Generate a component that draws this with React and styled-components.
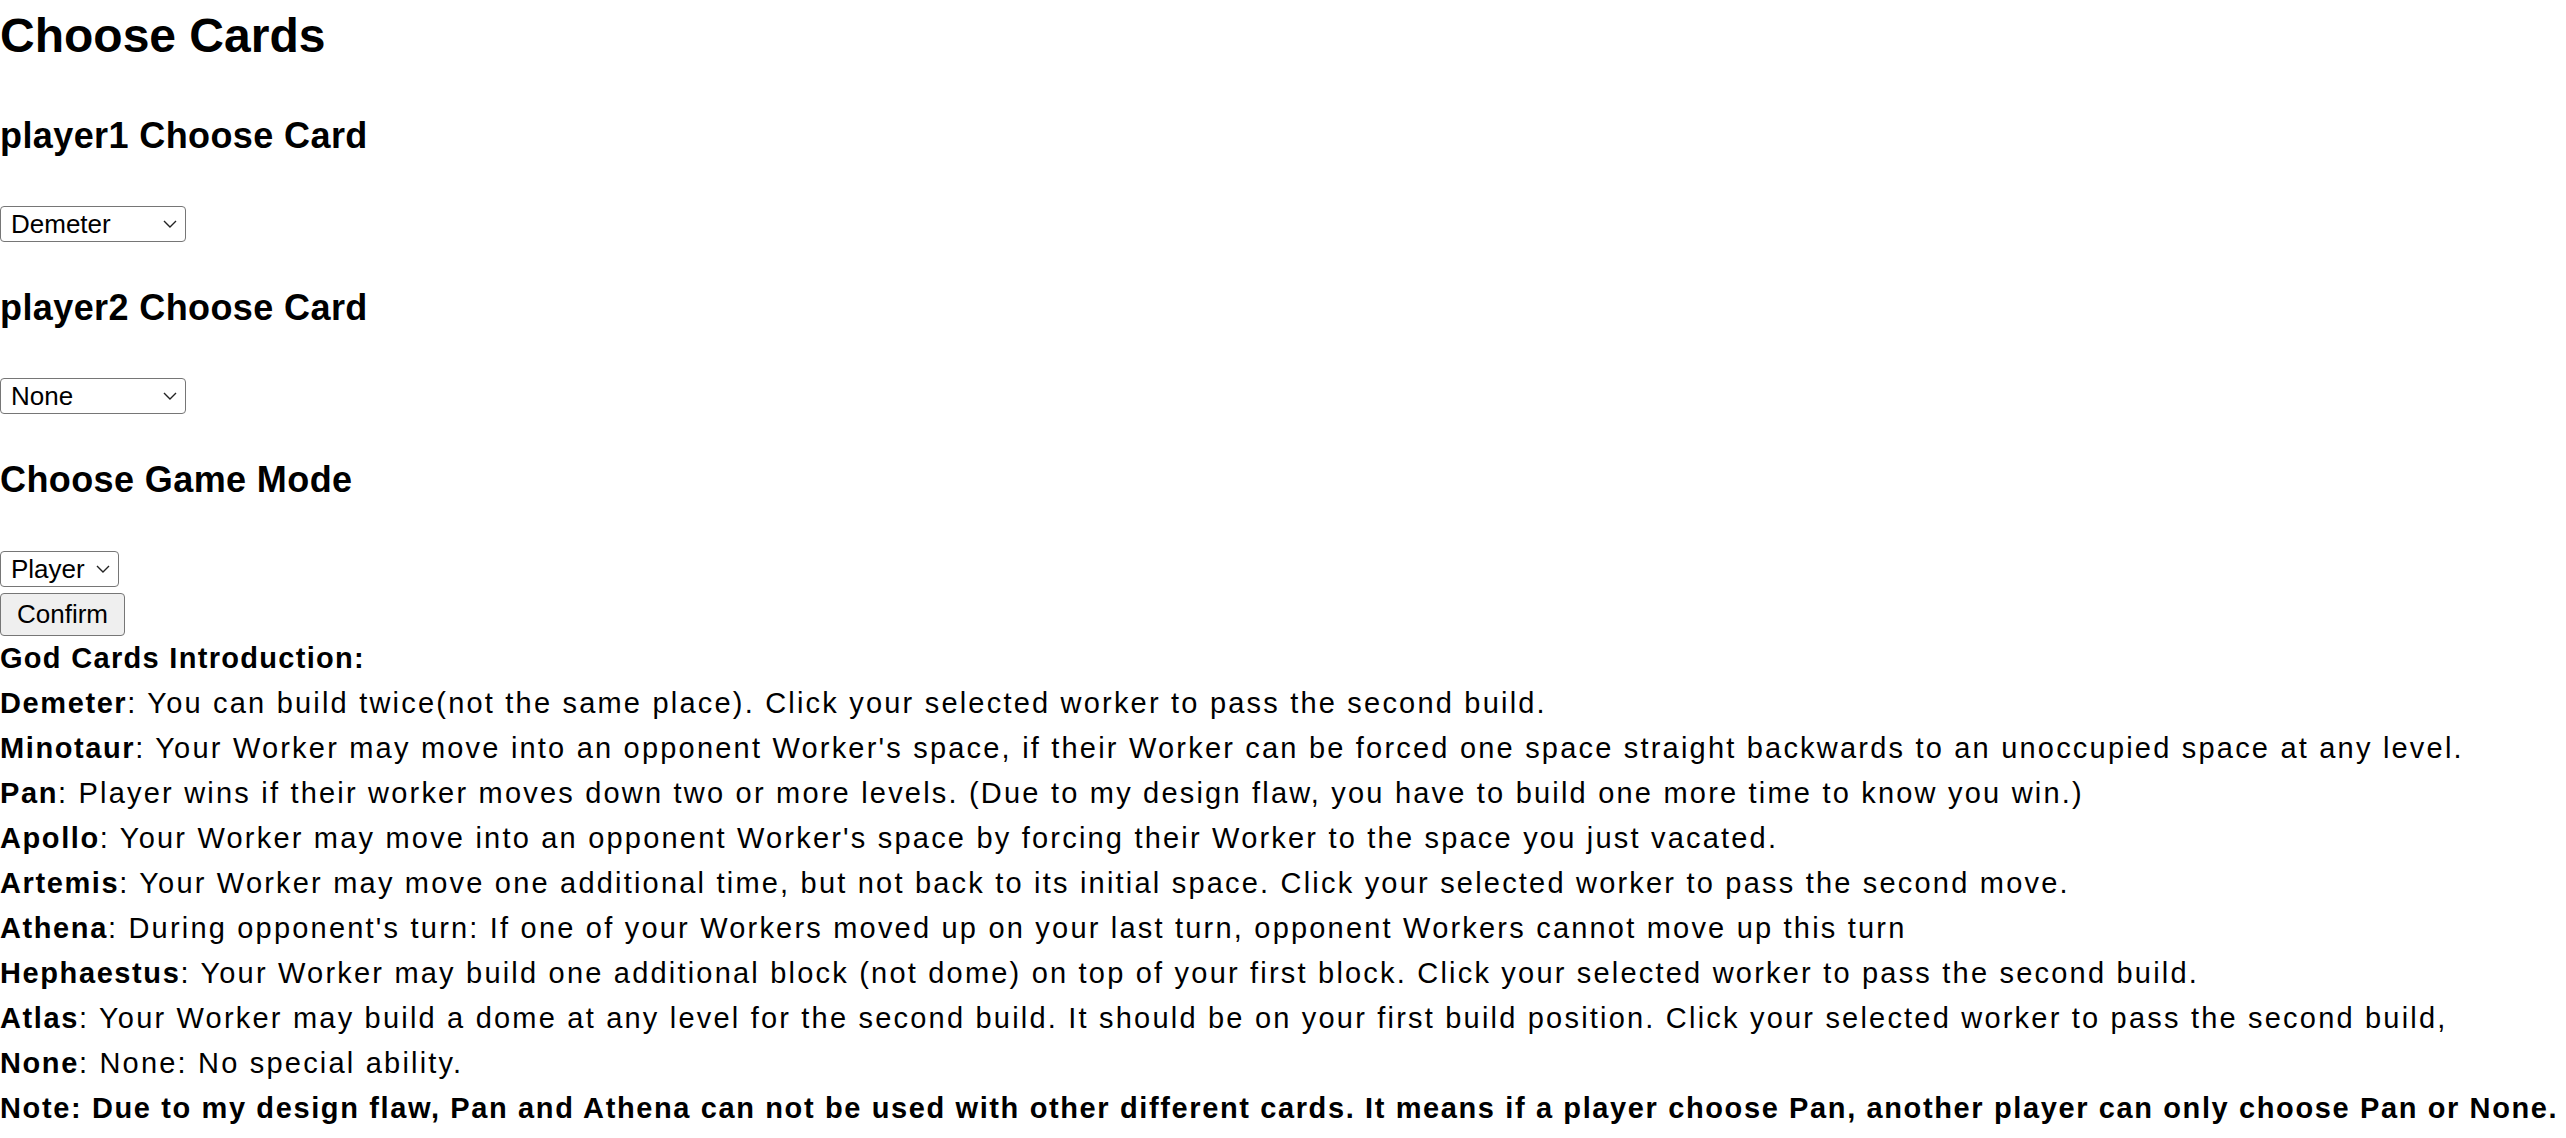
import React from "react";
import styled, { createGlobalStyle } from "styled-components";

const GlobalStyle = createGlobalStyle`
  body {
    margin: 0;
    background: #fff;
    color: #000;
    font-family: "Liberation Sans", Arial, sans-serif;
  }
`;

const Page = styled.div`
  display: flex;
  flex-direction: column;
  align-items: flex-start;
`;

const Title = styled.h1`
  margin: 8px 0 0;
  font-size: 48px;
  line-height: 56px;
  font-weight: 700;
`;

const Heading = styled.h2`
  margin: ${(p) => p.$top}px 0 0;
  font-size: 36px;
  line-height: 42px;
  font-weight: 700;
  letter-spacing: 0.4px;
`;

const SelectWrap = styled.div`
  position: relative;
  display: inline-block;
  margin-top: ${(p) => p.$top}px;
`;

const Select = styled.select`
  appearance: none;
  -webkit-appearance: none;
  display: block;
  box-sizing: border-box;
  width: ${(p) => p.$width}px;
  height: 36px;
  padding: 0 0 0 10px;
  border: 1px solid #767676;
  border-radius: 4px;
  background: #fff;
  color: #000;
  font-family: "Liberation Sans", Arial, sans-serif;
  font-size: 26px;
`;

const Chevron = styled.svg`
  position: absolute;
  right: 9px;
  top: 50%;
  width: 14px;
  height: 8px;
  margin-top: -4px;
  pointer-events: none;
`;

const Button = styled.button`
  box-sizing: border-box;
  margin-top: 6px;
  height: 43px;
  padding: 0 16px;
  border: 1px solid #767676;
  border-radius: 4px;
  background: #efefef;
  color: #000;
  font-family: "Liberation Sans", Arial, sans-serif;
  font-size: 26px;
`;

const Intro = styled.div`
  font-size: 29px;
  line-height: 45px;
  white-space: nowrap;
`;

const Line = styled.div`
  font-weight: ${(p) => (p.$bold ? 700 : 400)};
  letter-spacing: ${(p) => p.$spacing || 2.2}px;
`;

const Name = styled.b`
  font-weight: 700;
  letter-spacing: 1.6px;
`;

const cards = [
  "Demeter",
  "Minotaur",
  "Pan",
  "Apollo",
  "Artemis",
  "Athena",
  "Hephaestus",
  "Atlas",
  "None",
];

const intro = [
  ["Demeter", "You can build twice(not the same place). Click your selected worker to pass the second build."],
  ["Minotaur", "Your Worker may move into an opponent Worker's space, if their Worker can be forced one space straight backwards to an unoccupied space at any level."],
  ["Pan", "Player wins if their worker moves down two or more levels. (Due to my design flaw, you have to build one more time to know you win.)"],
  ["Apollo", "Your Worker may move into an opponent Worker's space by forcing their Worker to the space you just vacated."],
  ["Artemis", "Your Worker may move one additional time, but not back to its initial space. Click your selected worker to pass the second move."],
  ["Athena", "During opponent's turn: If one of your Workers moved up on your last turn, opponent Workers cannot move up this turn"],
  ["Hephaestus", "Your Worker may build one additional block (not dome) on top of your first block. Click your selected worker to pass the second build."],
  ["Atlas", "Your Worker may build a dome at any level for the second build. It should be on your first build position. Click your selected worker to pass the second build,"],
  ["None", "None: No special ability."],
];

const Dropdown = ({ top, width, value, options }) => (
  <SelectWrap $top={top}>
    <Select $width={width} defaultValue={value}>
      {options.map((o) => (
        <option key={o} value={o}>
          {o}
        </option>
      ))}
    </Select>
    <Chevron viewBox="0 0 14 8" fill="none">
      <path d="M1 1l6 6 6-6" stroke="#222" strokeWidth="1.4" />
    </Chevron>
  </SelectWrap>
);

export default function App() {
  return (
    <Page>
      <GlobalStyle />
      <Title>Choose Cards</Title>
      <Heading $top={51}>player1 Choose Card</Heading>
      <Dropdown top={49} width={186} value="Demeter" options={cards} />
      <Heading $top={45}>player2 Choose Card</Heading>
      <Dropdown top={49} width={186} value="None" options={cards} />
      <Heading $top={45}>Choose Game Mode</Heading>
      <Dropdown top={50} width={119} value="Player" options={["Player", "AI"]} />
      <Button>Confirm</Button>
      <Intro>
        <Line $bold $spacing={1.3}>God Cards Introduction:</Line>
        {intro.map(([name, text]) => (
          <Line key={name}>
            <Name>{name}</Name>: {text}
          </Line>
        ))}
        <Line $bold $spacing={1.62}>
          Note: Due to my design flaw, Pan and Athena can not be used with other different cards. It means if a player choose Pan, another player can only choose Pan or None.
        </Line>
      </Intro>
    </Page>
  );
}
